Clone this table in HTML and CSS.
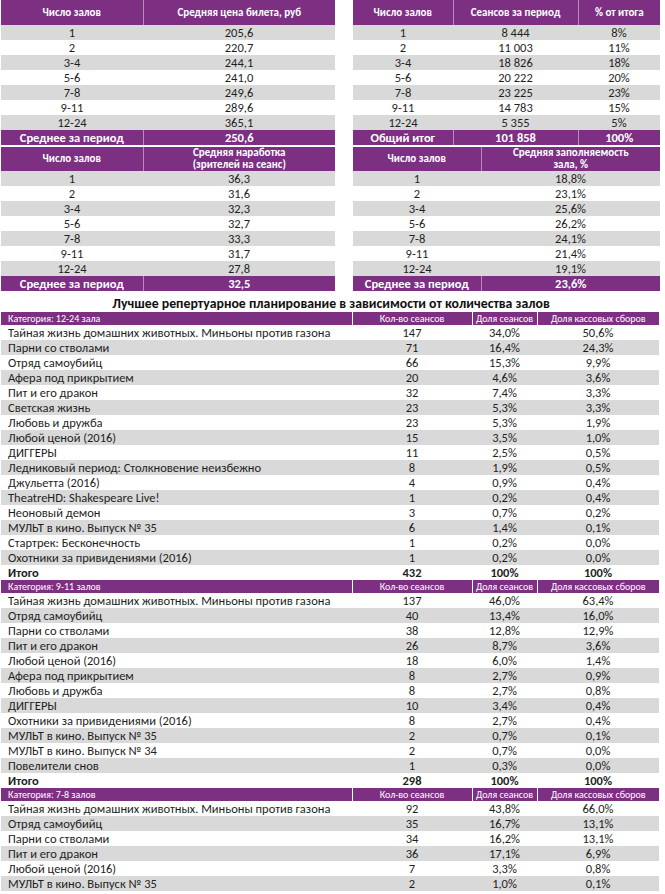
FILE: index.html
```html
<!DOCTYPE html>
<html lang="ru">
<head>
<meta charset="utf-8">
<title>Статистика кинотеатров</title>
<link rel="stylesheet" href="styles.css">
</head>
<body>
<div class="page">
  <div class="top-grid">
    <table class="t">
      <colgroup><col class="c-a"><col class="c-b"></colgroup>
      <thead><tr class="hd hd1"><th>Число залов</th><th>Средняя цена билета, руб</th></tr></thead>
      <tbody>
        <tr class="g"><td>1</td><td>205,6</td></tr>
        <tr><td>2</td><td>220,7</td></tr>
        <tr class="g"><td>3-4</td><td>244,1</td></tr>
        <tr><td>5-6</td><td>241,0</td></tr>
        <tr class="g"><td>7-8</td><td>249,6</td></tr>
        <tr><td>9-11</td><td>289,6</td></tr>
        <tr class="g"><td>12-24</td><td>365,1</td></tr>
        <tr class="tot"><td>Среднее за период</td><td>250,6</td></tr>
      </tbody>
    </table>
    <table class="t">
      <colgroup><col class="c-c"><col class="c-d"><col class="c-e"></colgroup>
      <thead><tr class="hd hd1"><th>Число залов</th><th>Сеансов за период</th><th>% от итога</th></tr></thead>
      <tbody>
        <tr class="g"><td>1</td><td>8 444</td><td>8%</td></tr>
        <tr><td>2</td><td>11 003</td><td>11%</td></tr>
        <tr class="g"><td>3-4</td><td>18 826</td><td>18%</td></tr>
        <tr><td>5-6</td><td>20 222</td><td>20%</td></tr>
        <tr class="g"><td>7-8</td><td>23 225</td><td>23%</td></tr>
        <tr><td>9-11</td><td>14 783</td><td>15%</td></tr>
        <tr class="g"><td>12-24</td><td>5 355</td><td>5%</td></tr>
        <tr class="tot"><td>Общий итог</td><td>101 858</td><td>100%</td></tr>
      </tbody>
    </table>
    <table class="t">
      <colgroup><col class="c-a"><col class="c-b"></colgroup>
      <thead><tr class="hd hd2"><th>Число залов</th><th>Средняя наработка<br>(зрителей на сеанс)</th></tr></thead>
      <tbody>
        <tr class="g"><td>1</td><td>36,3</td></tr>
        <tr><td>2</td><td>31,6</td></tr>
        <tr class="g"><td>3-4</td><td>32,3</td></tr>
        <tr><td>5-6</td><td>32,7</td></tr>
        <tr class="g"><td>7-8</td><td>33,3</td></tr>
        <tr><td>9-11</td><td>31,7</td></tr>
        <tr class="g"><td>12-24</td><td>27,8</td></tr>
        <tr class="tot"><td>Среднее за период</td><td>32,5</td></tr>
      </tbody>
    </table>
    <table class="t">
      <colgroup><col class="c-f"><col class="c-g"></colgroup>
      <thead><tr class="hd hd2"><th>Число залов</th><th>Средняя заполняемость<br>зала, %</th></tr></thead>
      <tbody>
        <tr class="g"><td>1</td><td>18,8%</td></tr>
        <tr><td>2</td><td>23,1%</td></tr>
        <tr class="g"><td>3-4</td><td>25,6%</td></tr>
        <tr><td>5-6</td><td>26,2%</td></tr>
        <tr class="g"><td>7-8</td><td>24,1%</td></tr>
        <tr><td>9-11</td><td>21,4%</td></tr>
        <tr class="g"><td>12-24</td><td>19,1%</td></tr>
        <tr class="tot"><td>Среднее за период</td><td>23,6%</td></tr>
      </tbody>
    </table>
  </div>

  <h1 class="title">Лучшее репертуарное планирование в зависимости от количества залов</h1>

  <table class="rep">
    <colgroup><col class="r1"><col class="r2"><col class="r3"><col class="r4"></colgroup>
    <tbody>
      <tr class="cat"><th>Категория: 12-24 зала</th><th>Кол-во сеансов</th><th>Доля сеансов</th><th>Доля кассовых сборов</th></tr>
      <tr><td>Тайная жизнь домашних животных. Миньоны против газона</td><td>147</td><td>34,0%</td><td>50,6%</td></tr>
      <tr class="g"><td>Парни со стволами</td><td>71</td><td>16,4%</td><td>24,3%</td></tr>
      <tr><td>Отряд самоубийц</td><td>66</td><td>15,3%</td><td>9,9%</td></tr>
      <tr class="g"><td>Афера под прикрытием</td><td>20</td><td>4,6%</td><td>3,6%</td></tr>
      <tr><td>Пит и его дракон</td><td>32</td><td>7,4%</td><td>3,3%</td></tr>
      <tr class="g"><td>Светская жизнь</td><td>23</td><td>5,3%</td><td>3,3%</td></tr>
      <tr><td>Любовь и дружба</td><td>23</td><td>5,3%</td><td>1,9%</td></tr>
      <tr class="g"><td>Любой ценой (2016)</td><td>15</td><td>3,5%</td><td>1,0%</td></tr>
      <tr><td>ДИГГЕРЫ</td><td>11</td><td>2,5%</td><td>0,5%</td></tr>
      <tr class="g"><td>Ледниковый период: Столкновение неизбежно</td><td>8</td><td>1,9%</td><td>0,5%</td></tr>
      <tr><td>Джульетта (2016)</td><td>4</td><td>0,9%</td><td>0,4%</td></tr>
      <tr class="g"><td>TheatreHD: Shakespeare Live!</td><td>1</td><td>0,2%</td><td>0,4%</td></tr>
      <tr><td>Неоновый демон</td><td>3</td><td>0,7%</td><td>0,2%</td></tr>
      <tr class="g"><td>МУЛЬТ в кино. Выпуск № 35</td><td>6</td><td>1,4%</td><td>0,1%</td></tr>
      <tr><td>Стартрек: Бесконечность</td><td>1</td><td>0,2%</td><td>0,0%</td></tr>
      <tr class="g"><td>Охотники за привидениями (2016)</td><td>1</td><td>0,2%</td><td>0,0%</td></tr>
      <tr class="sum"><td>Итого</td><td>432</td><td>100%</td><td>100%</td></tr>

      <tr class="cat"><th>Категория: 9-11 залов</th><th>Кол-во сеансов</th><th>Доля сеансов</th><th>Доля кассовых сборов</th></tr>
      <tr><td>Тайная жизнь домашних животных. Миньоны против газона</td><td>137</td><td>46,0%</td><td>63,4%</td></tr>
      <tr class="g"><td>Отряд самоубийц</td><td>40</td><td>13,4%</td><td>16,0%</td></tr>
      <tr><td>Парни со стволами</td><td>38</td><td>12,8%</td><td>12,9%</td></tr>
      <tr class="g"><td>Пит и его дракон</td><td>26</td><td>8,7%</td><td>3,6%</td></tr>
      <tr><td>Любой ценой (2016)</td><td>18</td><td>6,0%</td><td>1,4%</td></tr>
      <tr class="g"><td>Афера под прикрытием</td><td>8</td><td>2,7%</td><td>0,9%</td></tr>
      <tr><td>Любовь и дружба</td><td>8</td><td>2,7%</td><td>0,8%</td></tr>
      <tr class="g"><td>ДИГГЕРЫ</td><td>10</td><td>3,4%</td><td>0,4%</td></tr>
      <tr><td>Охотники за привидениями (2016)</td><td>8</td><td>2,7%</td><td>0,4%</td></tr>
      <tr class="g"><td>МУЛЬТ в кино. Выпуск № 35</td><td>2</td><td>0,7%</td><td>0,1%</td></tr>
      <tr><td>МУЛЬТ в кино. Выпуск № 34</td><td>2</td><td>0,7%</td><td>0,0%</td></tr>
      <tr class="g"><td>Повелители снов</td><td>1</td><td>0,3%</td><td>0,0%</td></tr>
      <tr class="sum"><td>Итого</td><td>298</td><td>100%</td><td>100%</td></tr>

      <tr class="cat"><th>Категория: 7-8 залов</th><th>Кол-во сеансов</th><th>Доля сеансов</th><th>Доля кассовых сборов</th></tr>
      <tr><td>Тайная жизнь домашних животных. Миньоны против газона</td><td>92</td><td>43,8%</td><td>66,0%</td></tr>
      <tr class="g"><td>Отряд самоубийц</td><td>35</td><td>16,7%</td><td>13,1%</td></tr>
      <tr><td>Парни со стволами</td><td>34</td><td>16,2%</td><td>13,1%</td></tr>
      <tr class="g"><td>Пит и его дракон</td><td>36</td><td>17,1%</td><td>6,9%</td></tr>
      <tr><td>Любой ценой (2016)</td><td>7</td><td>3,3%</td><td>0,8%</td></tr>
      <tr class="g"><td>МУЛЬТ в кино. Выпуск № 35</td><td>2</td><td>1,0%</td><td>0,1%</td></tr>
    </tbody>
  </table>
</div>
</body>
</html>
```
FILE: styles.css
```css
html, body {
  margin: 0;
  padding: 0;
  background: #ffffff;
}
body {
  font-family: Carlito, Lato, "Open Sans", sans-serif;
  color: #1f1f1f;
}
.page {
  width: 660px;
  padding-left: 1px;
}
.top-grid {
  display: grid;
  grid-template-columns: 334px 307px;
  column-gap: 18px;
  row-gap: 2px;
}
.t {
  border-collapse: collapse;
  table-layout: fixed;
  width: 100%;
}
.c-a { width: 142px; }
.c-b { width: 192px; }
.c-c { width: 100px; }
.c-d { width: 125px; }
.c-e { width: 82px; }
.c-f { width: 128px; }
.c-g { width: 179px; }
.t th, .t td {
  padding: 0;
  text-align: center;
  white-space: nowrap;
}
.t td {
  height: 15px;
  font-size: 12.5px;
  line-height: 15px;
}
.hd th {
  background: #7d2f82;
  color: #ffffff;
  font-size: 11px;
  font-weight: bold;
  line-height: 12px;
}
.hd1 th { height: 25px; }
.hd2 th { height: 24px; }
.hd th + th,
.tot td + td,
.cat th + th {
  border-left: 1px solid rgba(255, 255, 255, 0.45);
}
.g td { background: #d9d9d9; }
.tot td {
  background: #7d2f82;
  color: #ffffff;
  font-weight: bold;
  font-size: 12.5px;
}
.title {
  margin: 0;
  height: 21px;
  line-height: 26px;
  text-align: center;
  font-size: 13.8px;
  font-weight: bold;
  color: #111111;
}
.rep {
  border-collapse: collapse;
  table-layout: fixed;
  width: 658px;
}
.r1 { width: 351px; }
.r2 { width: 120px; }
.r3 { width: 65px; }
.r4 { width: 122px; }
.rep th, .rep td {
  padding: 0;
  white-space: nowrap;
  overflow: hidden;
}
.rep td {
  height: 15px;
  line-height: 15px;
  font-size: 12.5px;
  text-align: center;
}
.rep td:first-child {
  text-align: left;
  padding-left: 7px;
}
.cat th {
  height: 13px;
  line-height: 13px;
  background: #7d2f82;
  color: #ffffff;
  font-size: 10px;
  font-weight: normal;
  text-align: center;
}
.cat th:first-child {
  text-align: left;
  padding-left: 7px;
}
.sum td { font-weight: bold; }
```
